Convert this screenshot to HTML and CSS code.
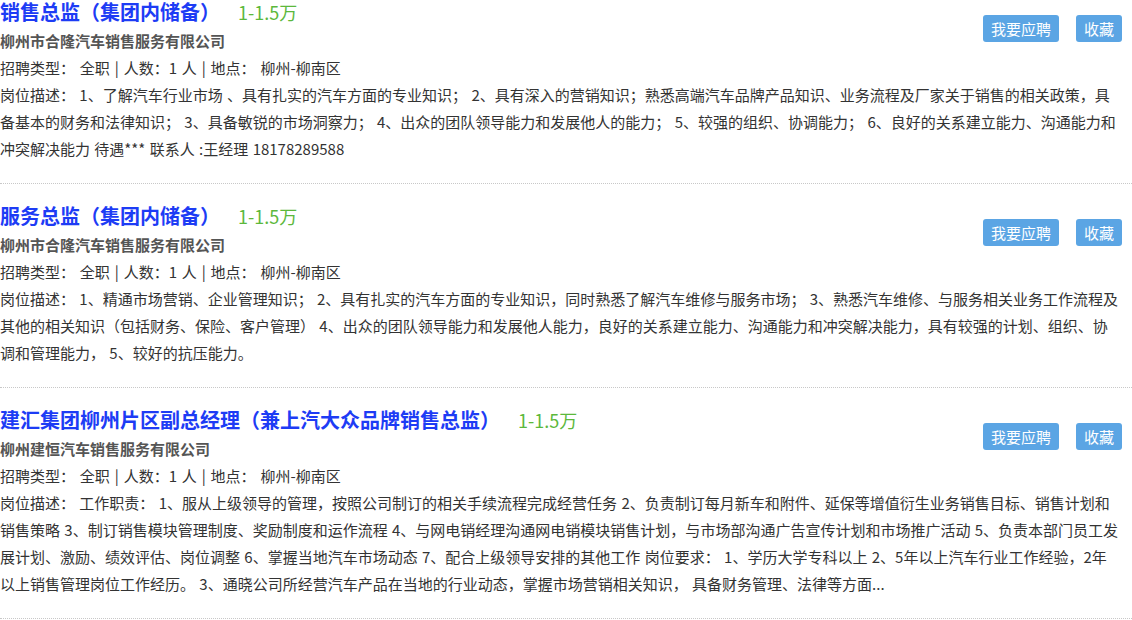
FILE: index.html
```html
<!DOCTYPE html>
<html lang="zh-CN">
<head>
    <meta charset="UTF-8">
    <title>招聘职位</title>
    <link rel="stylesheet" href="styles.css">
</head>
<body>
<div class="job-list">
    <div class="job">
        <div class="job-head">
            <div class="job-main">
                <h2 class="job-title"><a href="#">销售总监（集团内储备）</a><span class="salary">1-1.5万</span></h2>
                <p class="company">柳州市合隆汽车销售服务有限公司</p>
            </div>
            <div class="job-actions">
                <button class="btn">我要应聘</button>
                <button class="btn">收藏</button>
            </div>
        </div>
        <p class="job-info">招聘类型： 全职 | 人数：1 人 | 地点： 柳州-柳南区</p>
        <p class="job-desc">岗位描述： 1、了解汽车行业市场 、具有扎实的汽车方面的专业知识； 2、具有深入的营销知识；熟悉高端汽车品牌产品知识、业务流程及厂家关于销售的相关政策，具备基本的财务和法律知识； 3、具备敏锐的市场洞察力； 4、出众的团队领导能力和发展他人的能力； 5、较强的组织、协调能力； 6、良好的关系建立能力、沟通能力和冲突解决能力 待遇*** 联系人 :王经理 18178289588</p>
    </div>

    <div class="job">
        <div class="job-head">
            <div class="job-main">
                <h2 class="job-title"><a href="#">服务总监（集团内储备）</a><span class="salary">1-1.5万</span></h2>
                <p class="company">柳州市合隆汽车销售服务有限公司</p>
            </div>
            <div class="job-actions">
                <button class="btn">我要应聘</button>
                <button class="btn">收藏</button>
            </div>
        </div>
        <p class="job-info">招聘类型： 全职 | 人数：1 人 | 地点： 柳州-柳南区</p>
        <p class="job-desc">岗位描述： 1、精通市场营销、企业管理知识； 2、具有扎实的汽车方面的专业知识，同时熟悉了解汽车维修与服务市场； 3、熟悉汽车维修、与服务相关业务工作流程及其他的相关知识（包括财务、保险、客户管理） 4、出众的团队领导能力和发展他人能力，良好的关系建立能力、沟通能力和冲突解决能力，具有较强的计划、组织、协调和管理能力， 5、较好的抗压能力。</p>
    </div>

    <div class="job">
        <div class="job-head">
            <div class="job-main">
                <h2 class="job-title"><a href="#">建汇集团柳州片区副总经理（兼上汽大众品牌销售总监）</a><span class="salary">1-1.5万</span></h2>
                <p class="company">柳州建恒汽车销售服务有限公司</p>
            </div>
            <div class="job-actions">
                <button class="btn">我要应聘</button>
                <button class="btn">收藏</button>
            </div>
        </div>
        <p class="job-info">招聘类型： 全职 | 人数：1 人 | 地点： 柳州-柳南区</p>
        <p class="job-desc">岗位描述： 工作职责： 1、服从上级领导的管理，按照公司制订的相关手续流程完成经营任务 2、负责制订每月新车和附件、延保等增值衍生业务销售目标、销售计划和销售策略 3、制订销售模块管理制度、奖励制度和运作流程 4、与网电销经理沟通网电销模块销售计划，与市场部沟通广告宣传计划和市场推广活动 5、负责本部门员工发展计划、激励、绩效评估、岗位调整 6、掌握当地汽车市场动态 7、配合上级领导安排的其他工作 岗位要求： 1、学历大学专科以上 2、5年以上汽车行业工作经验，2年以上销售管理岗位工作经历。 3、通晓公司所经营汽车产品在当地的行业动态，掌握市场营销相关知识， 具备财务管理、法律等方面...</p>
    </div>
</div>
</body>
</html>
```

FILE: styles.css
```css
body {
    margin: 0;
    padding: 0;
    background: #fff;
    color: #333;
    font-family: "Microsoft YaHei", "Noto Sans CJK SC", sans-serif;
    font-size: 15px;
}

/* page is shown scrolled a little */
.job-list {
    margin-top: -20px;
}

.job {
    padding: 20px 12px 21px 0;
    border-bottom: 1px dotted #c8c8c8;
}

.job-head {
    display: flex;
    justify-content: space-between;
    align-items: flex-start;
}

.job-title {
    margin: 0 0 3px;
    font-size: 20px;
    line-height: 24px;
    font-weight: bold;
}

.job-title a {
    color: #1d3cf5;
    text-decoration: none;
}

.salary {
    margin-left: 18px;
    font-size: 18px;
    font-weight: normal;
    color: #5cb83c;
}

.company {
    margin: 0;
    font-size: 15px;
    line-height: 27px;
    font-weight: bold;
    color: #555;
}

.job-actions {
    display: flex;
    gap: 17px;
    margin: 15px -2px 0 0;
}

.btn {
    height: 27px;
    padding: 0 8px;
    font-family: inherit;
    font-size: 15px;
    color: #fff;
    background-color: #5ba5e4;
    border: none;
    border-radius: 3px;
    cursor: pointer;
}

.job-info, .job-desc {
    margin: 0;
    line-height: 27px;
    color: #333;
    word-spacing: 1px;
}

.job-info {
    word-spacing: 1.5px;
}
```
